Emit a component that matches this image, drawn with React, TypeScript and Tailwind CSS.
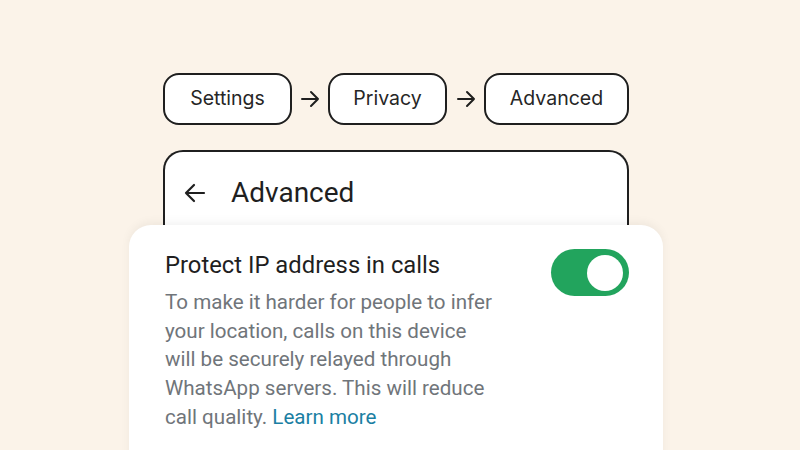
import React from "react";

function Arrow() {
  return (
    <svg width="20" height="18" viewBox="0 0 20 18" fill="none" stroke="#1f1f1f" strokeWidth="2" strokeLinecap="round" strokeLinejoin="round">
      <path d="M2 9h16M11 2l7 7-7 7" />
    </svg>
  );
}

function Pill({ label, w }: { label: string; w: string }) {
  return (
    <div className={`${w} h-[52px] rounded-[16px] border-2 border-[#1f1f1f] bg-white flex items-center justify-center text-[19.5px] text-[#262626]`}>
      {label}
    </div>
  );
}

export default function App() {
  return (
    <div
      className="w-[800px] h-[450px] overflow-hidden bg-[#fbf3e9] flex flex-col items-center pr-[8px]"
      style={{ fontFamily: "Inter, 'Noto Sans', sans-serif" }}
    >
      <div className="shrink-0 mt-[73px] w-[466px] flex items-center">
        <Pill label="Settings" w="w-[129px]" />
        <div className="w-[36px] flex justify-center"><Arrow /></div>
        <Pill label="Privacy" w="w-[119px]" />
        <div className="w-[37px] flex justify-center"><Arrow /></div>
        <Pill label="Advanced" w="w-[145px]" />
      </div>

      <div
        className="shrink-0 mt-[25px] w-[466px] h-[90px] rounded-t-[20px] border-2 border-b-0 border-[#1f1f1f] bg-white flex items-start pt-[23px] pl-[18px]"
        style={{ fontFamily: "Roboto, 'Noto Sans', sans-serif" }}
      >
        <svg width="24" height="24" viewBox="0 0 24 24" fill="none" stroke="#1f1f1f" strokeWidth="2.2" strokeLinecap="round" strokeLinejoin="round" className="mt-[6px]">
          <path d="M21 12H3M11 4l-8 8 8 8" />
        </svg>
        <span className="ml-[24px] text-[28px] leading-[36px] text-[#1f1f1f]">Advanced</span>
      </div>

      <div
        className="shrink-0 relative -mt-[15px] w-[534px] h-[260px] rounded-[22px] bg-white shadow-[0_-3px_10px_rgba(0,0,0,0.05)] flex justify-between pl-[36px] pr-[34px] pt-[24px]"
        style={{ fontFamily: "Roboto, 'Noto Sans', sans-serif" }}
      >
        <div className="flex flex-col">
          <div className="text-[23.8px] leading-[32px] text-[#1f1f1f]">Protect IP address in calls</div>
          <div className="mt-[7px] w-[332px] text-[20.6px] leading-[28.7px] text-[#70757a]">
            To make it harder for people to infer your location, calls on this device will be securely relayed through WhatsApp servers. This will reduce call quality. <span className="text-[#1b7fa3]">Learn more</span>
          </div>
        </div>
        <div className="mt-[0px] w-[78px] h-[47px] rounded-full bg-[#22a45d] flex items-center justify-end pr-[6px]">
          <div className="w-[36px] h-[36px] rounded-full bg-white" />
        </div>
      </div>
    </div>
  );
}
